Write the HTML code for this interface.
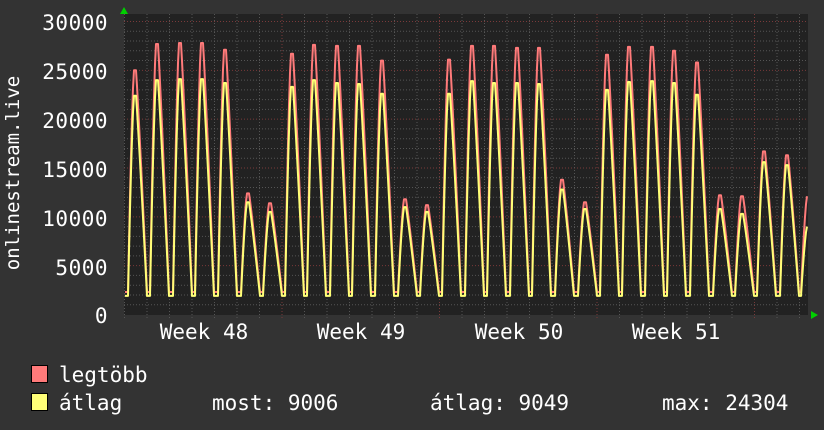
<!DOCTYPE html>
<html><head><meta charset="utf-8"><style>
html,body{margin:0;padding:0;background:#333;width:824px;height:430px;overflow:hidden}
svg{display:block}
text{font-family:"DejaVu Sans Mono","Liberation Mono",monospace;fill:#fff}
</style></head><body>
<svg id="g" width="824" height="430" xmlns="http://www.w3.org/2000/svg">
<rect x="0" y="0" width="824" height="430" fill="#333"/>
<rect x="124" y="14" width="684" height="301" fill="#222"/>
<g id="grid"></g>
<path id="mx" fill="none" stroke="#ff7a7a" stroke-width="2" stroke-linejoin="round"/>
<path id="av" fill="none" stroke="#ffff77" stroke-width="2" stroke-linejoin="round"/>
<polygon points="120,14 128,14 124,7" fill="#00d000"/>
<polygon points="811,311 811,319 818,315" fill="#00d000"/>
<g font-size="21" text-anchor="end" letter-spacing="0.5">
<text x="108" y="30">30000</text>
<text x="108" y="79">25000</text>
<text x="108" y="128">20000</text>
<text x="108" y="177">15000</text>
<text x="108" y="226">10000</text>
<text x="108" y="275">5000</text>
<text x="108" y="323">0</text>
</g>
<text font-size="19" transform="translate(19,173) rotate(-90)" text-anchor="middle">onlinestream.live</text>
<g font-size="21" text-anchor="middle">
<text x="204" y="339">Week 48</text>
<text x="361" y="339">Week 49</text>
<text x="519" y="339">Week 50</text>
<text x="676" y="339">Week 51</text>
</g>
<rect x="31.5" y="365.5" width="16" height="17" fill="#ff7a7a" stroke="#000"/>
<rect x="31.5" y="393.5" width="16" height="17" fill="#ffff77" stroke="#000"/>
<g font-size="21">
<text x="59" y="382">legtöbb</text>
<text x="59" y="410">átlag</text>
<text x="212" y="410">most: 9006</text>
<text x="430" y="410">átlag: 9049</text>
<text x="662" y="410">max: 24304</text>
</g>
</svg>
<script>
var ns="http://www.w3.org/2000/svg",g=document.getElementById('grid');
function ln(x1,y1,x2,y2,c){var l=document.createElementNS(ns,'line');l.setAttribute('x1',x1);l.setAttribute('y1',y1);l.setAttribute('x2',x2);l.setAttribute('y2',y2);l.setAttribute('stroke',c);l.setAttribute('stroke-dasharray','1,2');g.appendChild(l);}
function Y(v){return 314.5-v*0.009767;}
for(var v=1000;v<=30000;v+=1000){ln(124,Y(v),808,Y(v),v%5000?'#555':'#7a3a3a');}
for(var d=0;d<31;d++){var x=124.5+d*22.5;if(x>808)break;ln(x,14,x,318,(d%7==0&&d>0)?'#7a3a3a':'#555');}
var pk=[134,156,179,201,224,247,269,291,313,336,358,381,404,426,448,471,493,516,538,561,584,606,628,651,673,696,719,741,763,786,807];
var mx=[25000,27700,27800,27800,27100,12400,11400,26700,27600,27500,27500,26000,11800,11200,26100,27500,27500,27300,27300,13800,11500,26600,27400,27400,27000,25800,12200,12100,16700,16300,12100];
var av=[22400,24000,24100,24100,23700,11500,10500,23300,24000,23700,23600,22600,11000,10500,22600,23900,23700,23700,23600,12800,10800,23000,23800,23900,23700,22500,10800,10300,15600,15300,9000];
function shape(t){if(t<-6||t>13)return 0;if(t<=0)return Math.max(0,1-Math.pow(-t/6,1.4));if(t<=2)return 1;var u=(t-2)/11;return Math.max(0,1-Math.pow(u,1.1));}
function build(arr,base){var d='';for(var x=125;x<=807;x++){var v=base;for(var i=0;i<pk.length;i++){var t=x-pk[i];var s=shape(t);if(s>0)v=Math.max(v,base+(arr[i]-base)*s);}
d+=(x==125?'M':'L')+x+','+Y(v).toFixed(1);}return d;}
document.getElementById('mx').setAttribute('d',build(mx,2300));
document.getElementById('av').setAttribute('d',build(av,1900));
</script>
</body></html>
